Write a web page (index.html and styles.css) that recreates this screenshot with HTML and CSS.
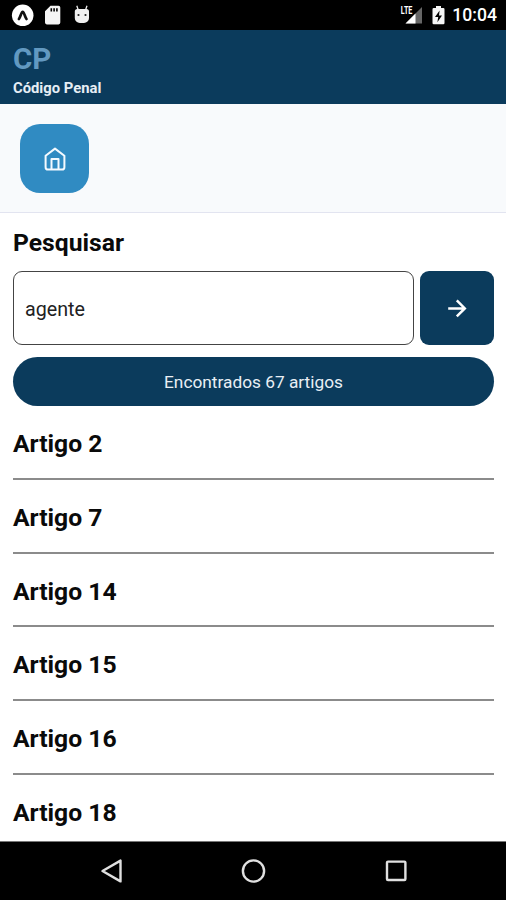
FILE: index.html
```html
<!DOCTYPE html>
<html lang="pt">
<head>
    <meta charset="UTF-8">
    <meta name="viewport" content="width=device-width, initial-scale=1.0">
    <title>Código Penal</title>
    <link rel="stylesheet" href="styles.css">
</head>
<body>
    <div class="statusbar">
        <svg class="statusbar__left" width="100" height="30" viewBox="0 0 100 30">
            <circle cx="22.7" cy="15.3" r="10.8" fill="#fff"/>
            <path d="M18.9 19C20.5 17 21.3 11.8 22.7 11.8S24.9 17 26.5 19" fill="none" stroke="#111" stroke-width="2.7" stroke-linecap="round"/>
            <path fill="#f5f5f5" fill-rule="evenodd" d="M50.5 5.8h8a1.8 1.8 0 0 1 1.8 1.8v15a1.8 1.8 0 0 1-1.8 1.8h-11.7a1.8 1.8 0 0 1-1.8-1.8V11.3zM50.5 8.2v3.2h1.6V8.2zM53.3 8.2v3.2h1.6V8.2zM56.1 8.2v3.2h1.6V8.2z"/>
            <path d="M76.8 5.8l1.4 4M87 5.8l-1.4 4" stroke="#eee" stroke-width="1.3"/>
            <path fill="#f0f0f0" d="M74.8 11.5a2.5 2.5 0 0 1 2.5-2.5h9.2a2.5 2.5 0 0 1 2.5 2.5v6.5a5 5 0 0 1-5 5h-4.2a5 5 0 0 1-5-5z"/>
            <circle cx="78.5" cy="15" r="1.1" fill="#222"/>
            <circle cx="85.5" cy="15" r="1.1" fill="#222"/>
        </svg>
        <div class="statusbar__right">
            <svg width="50" height="30" viewBox="0 0 50 30">
                <path d="M22 7v16.5H5.5z" fill="#666"/>
                <path d="M15.5 13.5v10h-10z" fill="#fff"/>
                <text class="statusbar__lte" x="0.8" y="14.2" textLength="11.6" lengthAdjust="spacingAndGlyphs">LTE</text>
                <path fill="#f5f5f5" fill-rule="evenodd" d="M36 6h5v2h2.3a1.2 1.2 0 0 1 1.2 1.2v13.8a1.2 1.2 0 0 1-1.2 1.2h-9.6a1.2 1.2 0 0 1-1.2-1.2V9.2a1.2 1.2 0 0 1 1.2-1.2H36zM39.6 10.5l-4.6 6.6h3.2l-.8 5.2 4.6-6.8h-3z"/>
            </svg>
            <span class="statusbar__time">10:04</span>
        </div>
    </div>

    <header class="header">
        <h1 class="header__title">CP</h1>
        <p class="header__subtitle">Código Penal</p>
    </header>

    <nav class="toolbar">
        <button class="toolbar__home" aria-label="Início">
            <svg width="24" height="26" viewBox="0 0 24 26" fill="none" stroke="#f4faff" stroke-width="2" stroke-linejoin="round">
                <path d="M2.6 9.7L12 2.6l9.4 7.1v11.5a2.4 2.4 0 0 1-2.4 2.4H5a2.4 2.4 0 0 1-2.4-2.4z"/>
                <path d="M8.5 23.5V13h7v10.5"/>
            </svg>
        </button>
    </nav>

    <main class="content">
        <h2 class="content__title">Pesquisar</h2>
        <div class="search">
            <input type="text" class="search__input" value="agente" aria-label="Pesquisar">
            <button class="search__button" aria-label="Procurar">
                <svg width="20" height="20" viewBox="0 0 20 20" fill="none" stroke="#fff" stroke-width="2.5">
                    <path d="M1.2 10.4h16M9.8 2.4l8 8-8 8"/>
                </svg>
            </button>
        </div>
        <div class="result">Encontrados 67 artigos</div>
        <ul class="articles">
            <li class="articles__item">Artigo 2</li>
            <li class="articles__item">Artigo 7</li>
            <li class="articles__item">Artigo 14</li>
            <li class="articles__item">Artigo 15</li>
            <li class="articles__item">Artigo 16</li>
            <li class="articles__item">Artigo 18</li>
        </ul>
    </main>

    <div class="navbar">
        <svg width="506" height="58" viewBox="0 0 506 58" fill="none" stroke="#e0e0e0" stroke-width="2.4" stroke-linejoin="round">
            <path d="M102.5 29L120.5 18.6v20.8z"/>
            <circle cx="253.5" cy="29" r="10.6"/>
            <rect x="387" y="19.6" width="18.4" height="18.4" rx="1"/>
        </svg>
    </div>
</body>
</html>
```
FILE: styles.css
```css
/* Global Styles */
* {
    box-sizing: border-box;
}

body {
    font-family: Roboto, Arial, sans-serif;
    color: #0a0a0a;
    background-color: #fff;
    margin: 0;
    height: 100vh;
    display: flex;
    flex-direction: column;
    overflow: hidden;
}

h1, h2, p, ul {
    margin: 0;
    padding: 0;
}

button {
    border: none;
    padding: 0;
    display: flex;
    align-items: center;
    justify-content: center;
}

svg {
    display: block;
}

/* Status bar */
.statusbar {
    background-color: #000;
    color: #fff;
    height: 30px;
    flex-shrink: 0;
    display: flex;
    justify-content: space-between;
}

.statusbar__right {
    display: flex;
    align-items: center;
    padding-right: 9px;
}

.statusbar__time {
    font-size: 17.6px;
    font-weight: 500;
    line-height: 32px;
    margin-left: 2px;
}

.statusbar__lte {
    font-size: 10.5px;
    font-weight: 700;
    fill: #fff;
}

/* Header */
.header {
    background-color: #0b3b5c;
    height: 74px;
    flex-shrink: 0;
    padding: 11px 13px 0;
}

.header__title {
    color: #6299c1;
    font-size: 29.5px;
    font-weight: 700;
    line-height: 36px;
}

.header__subtitle {
    color: #e6eef5;
    font-size: 14.8px;
    font-weight: 700;
    line-height: 22px;
}

.toolbar {
    background-color: #f8fafc;
    border-bottom: 1px solid #e2e4f0;
    height: 109px;
    flex-shrink: 0;
    padding: 20px;
}

.toolbar__home {
    background-color: #308bc2;
    border-radius: 20px;
    width: 69px;
    height: 69px;
}

/* Search */
.content {
    flex: 1;
    min-height: 0;
    overflow: hidden;
    padding: 0 12px 0 13px;
}

.content__title {
    font-size: 24.7px;
    font-weight: 700;
    line-height: 30px;
    padding: 15px 0 13px;
}

.search {
    display: flex;
    gap: 6px;
    height: 74px;
}

.search__input {
    flex: 1;
    min-width: 0;
    border: 1px solid #444;
    border-radius: 9px;
    background-color: #fff;
    color: #222;
    font-family: inherit;
    font-size: 19.7px;
    padding: 2px 11px 0;
}

.search__button {
    background-color: #0b3b5c;
    border-radius: 9px;
    width: 74px;
}

.result {
    background-color: #0b3b5c;
    border-radius: 25px;
    color: #e9eff5;
    font-size: 17.3px;
    line-height: 50px;
    height: 49px;
    margin-top: 12px;
    text-align: center;
}

.articles {
    list-style: none;
}

.articles__item {
    border-bottom: 2px solid #8b8b8b;
    font-size: 24.7px;
    font-weight: 700;
    line-height: 30px;
    height: 73.8px;
    padding-top: 23px;
}

/* Android navigation */
.navbar {
    background-color: #000;
    border-top: 1px solid #777;
    height: 59px;
    flex-shrink: 0;
}
```
